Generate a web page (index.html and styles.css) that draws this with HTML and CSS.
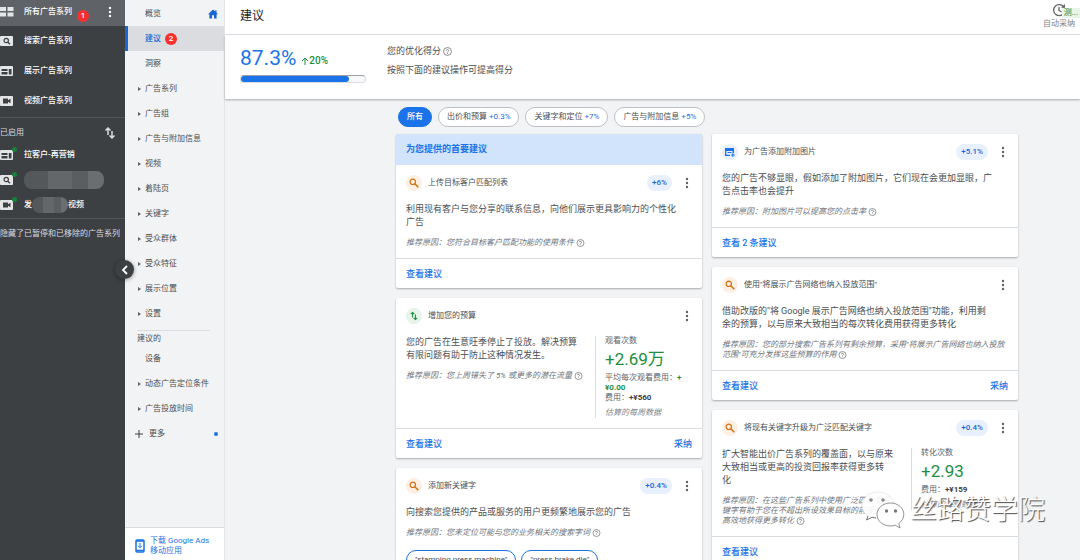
FILE: index.html
```html
<!DOCTYPE html>
<html lang="zh-CN">
<head>
    <meta charset="UTF-8">
    <meta name="viewport" content="width=device-width, initial-scale=1.0">
    <title>建议 - Google Ads</title>
    <link rel="stylesheet" href="styles.css">
</head>
<body>
    <!-- shared icons -->
    <svg class="sprite" aria-hidden="true">
        <symbol id="i-search" viewBox="0 0 10 10"><circle cx="3.800" cy="3.800" r="2.700" fill="none" stroke="currentColor" stroke-width="1.2"/><path d="M5.800 5.800L9.300 9.300" stroke="currentColor" stroke-width="1.500"/></symbol>
        <symbol id="i-dots" viewBox="0 0 4 12"><circle cx="2" cy="2" r="1.2"/><circle cx="2" cy="6" r="1.2"/><circle cx="2" cy="10" r="1.2"/></symbol>
        <symbol id="i-help" viewBox="0 0 10 10"><circle cx="5" cy="5" r="4.4" fill="none" stroke="currentColor" stroke-width=".8"/><path d="M3.7 4a1.3 1.3 0 1 1 2 1.1c-.5.3-.7.5-.7 1M5 6.8v.9" fill="none" stroke="currentColor" stroke-width=".8"/></symbol>
        <symbol id="i-updown" viewBox="0 0 12 14"><path d="M4 9V2M1.500 4.500L4 2l2.500 2.500M8 5v7M5.500 9.500L8 12l2.500-2.500" fill="none" stroke="currentColor" stroke-width="1.500"/></symbol>
        <symbol id="i-nav-search" viewBox="0 0 14 12"><rect x="0" y="1" width="13" height="10" rx="1" fill="#e4e5e6"/><circle cx="6.200" cy="5.500" r="2.200" fill="none" stroke="#3c4043" stroke-width="1.200"/><path d="M7.800 7.200L10 9.300" stroke="#3c4043" stroke-width="1.300"/></symbol>
        <symbol id="i-nav-display" viewBox="0 0 14 12"><rect x="0" y="1" width="13" height="10" rx="1" fill="#e4e5e6"/><path d="M1.500 4h6v2h-6zM1.500 7h6v2.500h-6zM8.800 4h2.700v5.500H8.800z" fill="#3c4043"/></symbol>
        <symbol id="i-nav-video" viewBox="0 0 14 12"><rect x="0" y="1" width="13" height="10" rx="1" fill="#e4e5e6"/><path d="M3 3.500h5v1.700l2.500-1.500v4.600L8 6.800v1.700H3z" fill="#3c4043"/></symbol>
    </svg>

    <div class="app">
        <aside class="campaigns">
            <div class="campaign campaign-all">
                <svg class="campaign-icon" viewBox="0 0 14 12"><path d="M0 1h6v4H0zM7.500 1h6v4h-6zM0 6.500h6v4H0zM7.500 6.500h6v4h-6z" fill="#e4e5e6"/></svg>
                <a href="#">所有广告系列</a>
                <span class="step">1</span>
                <button class="dots" aria-label="更多选项"><svg><use href="#i-dots"/></svg></button>
            </div>
            <div class="campaign"><svg class="campaign-icon"><use href="#i-nav-search"/></svg><a href="#">搜索广告系列</a></div>
            <div class="campaign"><svg class="campaign-icon"><use href="#i-nav-display"/></svg><a href="#">展示广告系列</a></div>
            <div class="campaign"><svg class="campaign-icon"><use href="#i-nav-video"/></svg><a href="#">视频广告系列</a></div>
            <div class="enabled">
                <div class="enabled-head">
                    <span>已启用</span>
                    <button class="sort" aria-label="排序"><svg><use href="#i-updown"/></svg></button>
                </div>
                <div class="campaign campaign-small"><span class="live"><svg class="campaign-icon"><use href="#i-nav-display"/></svg></span><a href="#">拉客户-再营销</a></div>
                <div class="campaign campaign-small"><span class="live"><svg class="campaign-icon"><use href="#i-nav-search"/></svg></span><span class="mask mask-long"></span></div>
                <div class="campaign campaign-small"><span class="live"><svg class="campaign-icon"><use href="#i-nav-video"/></svg></span><a class="masked-name" href="#">发<span class="mask mask-short"></span>视频</a></div>
            </div>
            <p class="hidden-note">隐藏了已暂停和已移除的广告系列</p>
            <button class="collapse" aria-label="收起"><svg viewBox="0 0 8 10"><path d="M6 1L2 5l4 4" fill="none" stroke="#fff" stroke-width="1.800"/></svg></button>
        </aside>

        <nav class="pages">
            <ul>
                <li><a href="#">概览</a><svg class="home" viewBox="0 0 10 10"><path d="M5 .5L0 5.200h1.400V9.500H4V6.300h2v3.200h2.600V5.200H10L8.500 3.700V1.200H7.300v1.400z" fill="#1967d2"/></svg></li>
                <li class="active"><a href="#">建议</a><span class="step">2</span></li>
                <li><a href="#">洞察</a></li>
                <li class="more"><a href="#">广告系列</a></li>
                <li class="more"><a href="#">广告组</a></li>
                <li class="more"><a href="#">广告与附加信息</a></li>
                <li class="more"><a href="#">视频</a></li>
                <li class="more"><a href="#">着陆页</a></li>
                <li class="more"><a href="#">关键字</a></li>
                <li class="more"><a href="#">受众群体</a></li>
                <li class="more"><a href="#">受众特征</a></li>
                <li class="more"><a href="#">展示位置</a></li>
                <li class="more"><a href="#">设置</a></li>
            </ul>
            <h2 class="suggested">建议的</h2>
            <ul>
                <li><a href="#">设备</a></li>
                <li class="more"><a href="#">动态广告定位条件</a></li>
                <li class="more"><a href="#">广告投放时间</a></li>
            </ul>
            <button class="expand">
                <svg viewBox="0 0 8 8"><path d="M4 0v8M0 4h8" stroke="#3c4043"/></svg>
                <span>更多</span>
                <span class="dot"></span>
            </button>
            <a class="download" href="#">
                <svg viewBox="0 0 10 14"><rect x="1" y="1" width="8" height="12" rx="1" fill="none" stroke="#1a73e8" stroke-width="1.500"/><path d="M1 11.500h8M1 2h8" stroke="#1a73e8" stroke-width="1.500"/><path d="M5 4v4.500M3 6.700l2 2 2-2" fill="none" stroke="#1a73e8"/></svg>
                <span>下载 Google Ads<br>移动应用</span>
            </a>
        </nav>

        <main class="main">
            <header class="topbar">
                <h1>建议</h1>
                <button class="auto-apply">
                    <svg viewBox="0 0 14 14"><path d="M12 4.500A5.500 5.500 0 1 0 12.300 9M7 4v3.500l2.500 1.500" fill="none" stroke="#5f6368" stroke-width="1.300"/><path d="M9 4.800h4V1z" fill="#5f6368"/></svg>
                    <span>自动采纳</span>
                    <span class="beta">测...</span>
                </button>
            </header>

            <section class="score">
                <div class="score-value">
                    <div class="score-line">
                        <strong>87.3%</strong>
                        <span class="uplift"><svg viewBox="0 0 8 8"><path d="M4 8V1M1 4l3-3 3 3" fill="none" stroke="currentColor"/></svg>20%</span>
                    </div>
                    <div class="bar"><div class="bar-fill" style="width: 87.3%"></div></div>
                </div>
                <div class="score-text">
                    <p>您的优化得分 <svg class="help"><use href="#i-help"/></svg></p>
                    <p>按照下面的建议操作可提高得分</p>
                </div>
            </section>

            <div class="content">
                <div class="filters">
                    <button class="filter selected">所有</button>
                    <button class="filter">出价和预算 <span>+0.3%</span></button>
                    <button class="filter">关键字和定位 <span>+7%</span></button>
                    <button class="filter">广告与附加信息 <span>+5%</span></button>
                </div>

                <div class="columns">
                    <div class="column">
                        <article class="card">
                            <h2 class="priority">为您提供的首要建议</h2>
                            <div class="card-body">
                                <div class="card-head">
                                    <span class="badge orange"><svg><use href="#i-search"/></svg></span>
                                    <h3>上传目标客户匹配列表</h3>
                                    <span class="pill">+6%</span>
                                    <button class="dots" aria-label="更多选项"><svg><use href="#i-dots"/></svg></button>
                                </div>
                                <p class="desc">利用现有客户与您分享的联系信息，向他们展示更具影响力的个性化<br>广告</p>
                                <p class="reason">推荐原因：您符合目标客户匹配功能的使用条件 <svg class="help"><use href="#i-help"/></svg></p>
                            </div>
                            <footer class="card-foot"><a href="#">查看建议</a></footer>
                        </article>

                        <article class="card">
                            <div class="card-body">
                                <div class="card-head">
                                    <span class="badge green"><svg><use href="#i-updown"/></svg></span>
                                    <h3>增加您的预算</h3>
                                    <button class="dots" aria-label="更多选项"><svg><use href="#i-dots"/></svg></button>
                                </div>
                                <div class="split">
                                    <div>
                                        <p class="desc">您的广告在生意旺季停止了投放。解决预算<br>有限问题有助于防止这种情况发生。</p>
                                        <p class="reason">推荐原因：您上周错失了 5% 或更多的潜在流量 <svg class="help"><use href="#i-help"/></svg></p>
                                    </div>
                                    <div class="stats">
                                        <p>观看次数</p>
                                        <p class="big">+2.69万</p>
                                        <p>平均每次观看费用：<b class="up">+<br>¥0.00</b></p>
                                        <p>费用：<b>+¥560</b></p>
                                        <p class="estimate">估算的每周数据</p>
                                    </div>
                                </div>
                            </div>
                            <footer class="card-foot"><a href="#">查看建议</a><button>采纳</button></footer>
                        </article>

                        <article class="card">
                            <div class="card-body">
                                <div class="card-head">
                                    <span class="badge orange"><svg><use href="#i-search"/></svg></span>
                                    <h3>添加新关键字</h3>
                                    <span class="pill">+0.4%</span>
                                    <button class="dots" aria-label="更多选项"><svg><use href="#i-dots"/></svg></button>
                                </div>
                                <p class="desc">向搜索您提供的产品或服务的用户更频繁地展示您的广告</p>
                                <p class="reason">推荐原因：您未定位可能与您的业务相关的搜索字词 <svg class="help"><use href="#i-help"/></svg></p>
                                <div class="keywords">
                                    <button>"stamping press machine"</button>
                                    <button>"press brake die"</button>
                                </div>
                            </div>
                        </article>
                    </div>

                    <div class="column">
                        <article class="card">
                            <div class="card-body">
                                <div class="card-head">
                                    <span class="badge blue"><svg viewBox="0 0 10 10"><path d="M0 1h9v5H7.500V4H1.300v3.700H5V9H0zM2.500 5h4v1h-4zM7.300 6.300h1v1.200h1.500v1H8.300V10h-1V8.500H6v-1h1.300z" fill="#1a73e8"/></svg></span>
                                    <h3>为广告添加附加图片</h3>
                                    <span class="pill">+5.1%</span>
                                    <button class="dots" aria-label="更多选项"><svg><use href="#i-dots"/></svg></button>
                                </div>
                                <p class="desc">您的广告不够显眼，假如添加了附加图片，它们现在会更加显眼，广<br>告点击率也会提升</p>
                                <p class="reason">推荐原因：附加图片可以提高您的点击率 <svg class="help"><use href="#i-help"/></svg></p>
                            </div>
                            <footer class="card-foot"><a href="#">查看 2 条建议</a></footer>
                        </article>

                        <article class="card">
                            <div class="card-body">
                                <div class="card-head">
                                    <span class="badge orange"><svg><use href="#i-search"/></svg></span>
                                    <h3>使用"将展示广告网络也纳入投放范围"</h3>
                                    <button class="dots" aria-label="更多选项"><svg><use href="#i-dots"/></svg></button>
                                </div>
                                <p class="desc">借助改版的"将 Google 展示广告网络也纳入投放范围"功能，利用剩<br>余的预算，以与原来大致相当的每次转化费用获得更多转化</p>
                                <p class="reason">推荐原因：您的部分搜索广告系列有剩余预算，采用"将展示广告网络也纳入投放范围"可充分发挥这些预算的作用 <svg class="help"><use href="#i-help"/></svg></p>
                            </div>
                            <footer class="card-foot"><a href="#">查看建议</a><button>采纳</button></footer>
                        </article>

                        <article class="card">
                            <div class="card-body">
                                <div class="card-head">
                                    <span class="badge orange"><svg><use href="#i-search"/></svg></span>
                                    <h3>将现有关键字升级为广泛匹配关键字</h3>
                                    <span class="pill">+0.4%</span>
                                    <button class="dots" aria-label="更多选项"><svg><use href="#i-dots"/></svg></button>
                                </div>
                                <div class="split">
                                    <div>
                                        <p class="desc">扩大智能出价广告系列的覆盖面，以与原来<br>大致相当或更高的投资回报率获得更多转<br>化</p>
                                        <p class="reason">推荐原因：在这些广告系列中使用广泛匹配类关<br>键字有助于您在不超出所设效果目标的前提下<br>高效地获得更多转化 <svg class="help"><use href="#i-help"/></svg></p>
                                    </div>
                                    <div class="stats">
                                        <p>转化次数</p>
                                        <p class="big">+2.93</p>
                                        <p>费用：<b>+¥159</b></p>
                                        <p class="estimate">估算的每周数据</p>
                                    </div>
                                </div>
                            </div>
                            <footer class="card-foot"><a href="#">查看建议</a></footer>
                        </article>
                    </div>
                </div>
            </div>
        </main>
    </div>

    <div class="watermark">
        <svg viewBox="0 0 44 38">
            <path d="M17 1C8 1 1 7 1 14.500c0 4.500 2.300 8 6 10.500L5.500 29l5.500-2.700c2 .6 4 .8 6 .8 9 0 16-5.500 16-12.800S26 1 17 1z" fill="#fff" fill-opacity=".9" stroke="#ddd" stroke-width=".6"/>
            <path d="M7 25L5.500 29l5.500-2.700 4 .7" fill="none" stroke="#777"/>
            <path d="M29.500 12C22 12 16 17 16 23.500S22 35 29.500 35c1.700 0 3.300-.3 4.800-.8L39 37l-1.200-4.500c3-2.200 5-5.300 5-9C42.800 17 37 12 29.500 12z" fill="#fff" stroke="#777" stroke-width=".8"/>
            <circle cx="10" cy="9" r="1.800" fill="#888"/><circle cx="22" cy="9" r="1.800" fill="#888"/>
            <circle cx="25.500" cy="20" r="1.700" fill="#777"/><circle cx="34.500" cy="20" r="1.700" fill="#777"/>
        </svg>
        <span>丝路赞学院</span>
    </div>
</body>
</html>
```
FILE: styles.css
```css
* {
    box-sizing: border-box;
}
body {
    margin: 0;
    font-family: Roboto, "Noto Sans CJK SC", sans-serif;
    font-size: 8px;
    line-height: 10px;
    color: #4a4e52;
    background-color: #f1f3f4;
}
h1, h2, h3, p, ul {
    margin: 0;
    padding: 0;
    font-weight: normal;
}
ul {
    list-style-type: none;
}
a {
    color: inherit;
    text-decoration: none;
}
button {
    margin: 0;
    padding: 0;
    border: none;
    background: none;
    font: inherit;
    color: inherit;
    cursor: pointer;
}
svg {
    display: block;
    flex: none;
}
.sprite {
    display: none;
}
.app {
    display: flex;
    height: 100vh;
    overflow: hidden;
}
.dots {
    display: flex;
    justify-content: center;
    width: 10px;
    fill: #5f6368;
}
.dots svg {
    width: 4px;
    height: 12px;
}
.step {
    width: 12px;
    height: 12px;
    border-radius: 50%;
    background-color: #f8312f;
    color: #fff;
    line-height: 12px;
    text-align: center;
}

/* Campaign list */
.campaigns {
    position: relative;
    flex: none;
    width: 125px;
    background-color: #3c4043;
    color: #fff;
}
.campaign {
    display: flex;
    align-items: center;
    height: 30px;
    gap: 10px;
    font-weight: 500;
}
.campaign-all {
    height: 26px;
    padding-bottom: 3px;
    background-color: #5f6368;
}
.campaign-all .step {
    margin: 8px 0 0 -5px;
}
.campaign-all .dots {
    margin: 0 10px 0 auto;
    fill: #fff;
}
.campaign-icon {
    width: 14px;
    height: 12px;
}
.enabled {
    margin-top: 1px;
    border-top: 1px solid #55585b;
    border-bottom: 1px solid #55585b;
    padding-bottom: 1px;
}
.enabled-head {
    display: flex;
    align-items: center;
    justify-content: space-between;
    height: 24px;
    padding: 6px 9px 0 0;
    color: #dadce0;
}
.sort svg {
    width: 12px;
    height: 14px;
}
.campaign-small {
    height: 25px;
}
.live {
    position: relative;
}
.live::after {
    content: "";
    position: absolute;
    top: -2px;
    right: -3px;
    width: 5px;
    height: 5px;
    border-radius: 50%;
    background-color: #188038;
}
.masked-name {
    display: flex;
    align-items: center;
}
.mask {
    border-radius: 8px;
    background: linear-gradient(90deg, #55585b 0 30%, #64676a 30% 60%, #5b5e61 60% 80%, #6b6e71 80%);
}
.mask-long {
    width: 80px;
    height: 18px;
}
.mask-short {
    width: 36px;
    height: 16px;
}
.hidden-note {
    padding-top: 10px;
    color: #dadce0;
    white-space: nowrap;
}
.collapse {
    position: absolute;
    top: 260px;
    right: -9px;
    display: flex;
    align-items: center;
    justify-content: center;
    width: 19px;
    height: 19px;
    border-radius: 50%;
    background-color: #3c4043;
    box-shadow: 0 1px 4px rgba(0, 0, 0, 0.4);
}
.collapse svg {
    width: 8px;
    height: 10px;
}

/* Page menu */
.pages {
    display: flex;
    flex-direction: column;
    flex: none;
    width: 100px;
    border-right: 1px solid #e3e5e8;
}
.pages li {
    display: flex;
    align-items: center;
    height: 25px;
    padding: 0 6px 0 20px;
}
.pages .more {
    padding-left: 13px;
}
.pages .more::before {
    content: "";
    margin-right: 4px;
    border: 2px solid transparent;
    border-left: 3px solid #5f6368;
    border-right-width: 0;
}
.pages .active {
    gap: 4px;
    padding-left: 17px;
    border-left: 3px solid #1967d2;
    background-color: #dadce0;
    color: #1967d2;
    font-weight: 500;
}
.pages ul:first-child {
    padding-top: 1px;
}
.home {
    width: 10px;
    height: 10px;
    margin-left: auto;
}
.suggested {
    margin: 4px 14px 2px 12px;
    padding-top: 3px;
    border-top: 1px solid #dadce0;
    font-size: 8px;
    line-height: 10px;
}
.expand {
    display: flex;
    align-items: center;
    gap: 6px;
    height: 25px;
    padding: 0 6px 0 10px;
}
.expand svg {
    width: 8px;
    height: 8px;
}
.dot {
    width: 4px;
    height: 4px;
    margin-left: auto;
    border-radius: 50%;
    background-color: #1a73e8;
}
.download {
    display: flex;
    align-items: center;
    gap: 5px;
    height: 33px;
    margin-top: auto;
    padding: 3px 10px 0;
    border-top: 1px solid #dadce0;
    background-color: #fff;
    color: #1a73e8;
}
.download svg {
    width: 10px;
    height: 14px;
}

/* Header and score */
.main {
    flex: 1;
    min-width: 0;
}
.topbar {
    display: flex;
    align-items: center;
    justify-content: space-between;
    height: 35px;
    padding: 0 5px 2px 15px;
    border-bottom: 1px solid #dfe1e4;
    background-color: #fff;
}
.topbar h1 {
    font-size: 12px;
    line-height: 16px;
    color: #202124;
}
.auto-apply {
    position: relative;
    display: flex;
    flex-direction: column;
    align-items: center;
    gap: 2px;
    color: #80868b;
}
.auto-apply > svg {
    width: 14px;
    height: 14px;
}
.beta {
    position: absolute;
    top: 5px;
    right: -5px;
    padding: 0 2px;
    background-color: #e6f4ea;
    color: #188038;
}
.score {
    position: relative;
    display: flex;
    gap: 20px;
    height: 64px;
    padding: 11px 15px;
    background-color: #fff;
    box-shadow: 0 1px 2px rgba(60, 64, 67, 0.4);
}
.score-value {
    width: 126px;
}
.score-line {
    display: flex;
    align-items: baseline;
    gap: 5px;
}
.score-line strong {
    font-size: 21px;
    line-height: 25px;
    font-weight: normal;
    color: #1a73e8;
}
.uplift {
    display: flex;
    align-items: center;
    font-size: 10px;
    font-weight: 500;
    color: #1e8e3e;
}
.uplift svg {
    width: 8px;
    height: 8px;
}
.bar {
    height: 8px;
    margin-top: 4px;
    border: 1px solid #dadce0;
    border-top-color: #9aa0a6;
    border-radius: 4px;
    background-color: #f8f9fa;
}
.bar-fill {
    height: 100%;
    border-radius: 4px;
    background-color: #1a73e8;
}
.score-text {
    font-size: 9px;
    line-height: 19px;
    padding-left: 1px;
    margin-top: -4px;
}
.help {
    display: inline-block;
    width: 9px;
    height: 9px;
    vertical-align: -2px;
    color: #5f6368;
}

/* Recommendation cards */
.content {
    padding: 8px 62px 10px 20%;
}
.filters {
    display: flex;
    gap: 6px;
    padding: 0 2px;
}
.filter {
    height: 20px;
    padding: 0 8px;
    border: 1px solid #bdc1c6;
    border-radius: 10px;
    background-color: #fff;
    white-space: nowrap;
}
.filter span {
    color: #1a73e8;
}
.filter.selected {
    border-color: #1a73e8;
    background-color: #1a73e8;
    color: #fff;
    font-weight: 500;
}
.columns {
    display: grid;
    grid-template-columns: 1fr 1fr;
    gap: 10px;
    margin-top: 7px;
}
.column {
    display: flex;
    flex-direction: column;
    gap: 10px;
    min-width: 0;
}
.card {
    border-radius: 2px;
    background-color: #fff;
    box-shadow: 0 1px 2px rgba(60, 64, 67, 0.4);
}
.priority {
    padding: 8px 10px;
    background-color: #d2e3fc;
    font-size: 9px;
    line-height: 15px;
    font-weight: 700;
    color: #1a73e8;
}
.card-body {
    padding: 0 10px 10px;
}
.card-head {
    display: flex;
    align-items: center;
    padding: 10px 0 12px;
}
.card-head h3 {
    margin-right: auto;
    font-size: 8px;
    line-height: 16px;
}
.card-head .dots {
    margin-left: 10px;
}
.badge {
    display: flex;
    align-items: center;
    justify-content: center;
    width: 16px;
    height: 16px;
    margin-right: 6px;
    border-radius: 50%;
}
.badge svg {
    width: 10px;
    height: 10px;
}
.orange {
    background-color: #feefe3;
    color: #d56e0c;
}
.green {
    background-color: #e6f4ea;
    color: #1e8e3e;
}
.blue {
    background-color: #e8f0fe;
}
.pill {
    padding: 0 5px;
    border-radius: 8px;
    background-color: #e8f0fe;
    color: #1967d2;
    line-height: 16px;
    font-weight: 500;
}
.desc {
    font-size: 9px;
    line-height: 13px;
}
.reason {
    margin-top: 9px;
    font-style: italic;
    color: #70757a;
}
.reason .help {
    height: 8px;
}
.split {
    display: grid;
    grid-template-columns: 1fr 97px;
    white-space: nowrap;
}
.stats {
    padding-left: 9px;
    border-left: 1px solid #dadce0;
    align-self: start;
    color: #5f6368;
}
.stats b {
    color: #3c4043;
}
.stats .up {
    color: #1e8e3e;
}
.stats .big {
    margin: 1px 0 2px;
    font-size: 17px;
    line-height: 24px;
    color: #1e8e3e;
}
.stats .estimate {
    margin-top: 5px;
    font-style: italic;
    color: #80868b;
}
.card-foot {
    display: flex;
    align-items: center;
    justify-content: space-between;
    height: 30px;
    padding: 0 10px;
    border-top: 1px solid #dadce0;
    font-size: 9px;
    font-weight: 500;
    color: #1a73e8;
}
.keywords {
    display: flex;
    gap: 5px;
    margin-top: 12px;
}
.keywords button {
    height: 20px;
    padding: 0 8px;
    border: 1px solid #1a73e8;
    border-radius: 10px;
}

.watermark {
    position: absolute;
    right: 35px;
    bottom: 31px;
    display: flex;
    align-items: center;
    gap: 5px;
    font-size: 27px;
    line-height: 32px;
    font-weight: 300;
    color: #fff;
    text-shadow: 1px 1px 1px #444;
}
.watermark svg {
    width: 44px;
    height: 38px;
}
```
